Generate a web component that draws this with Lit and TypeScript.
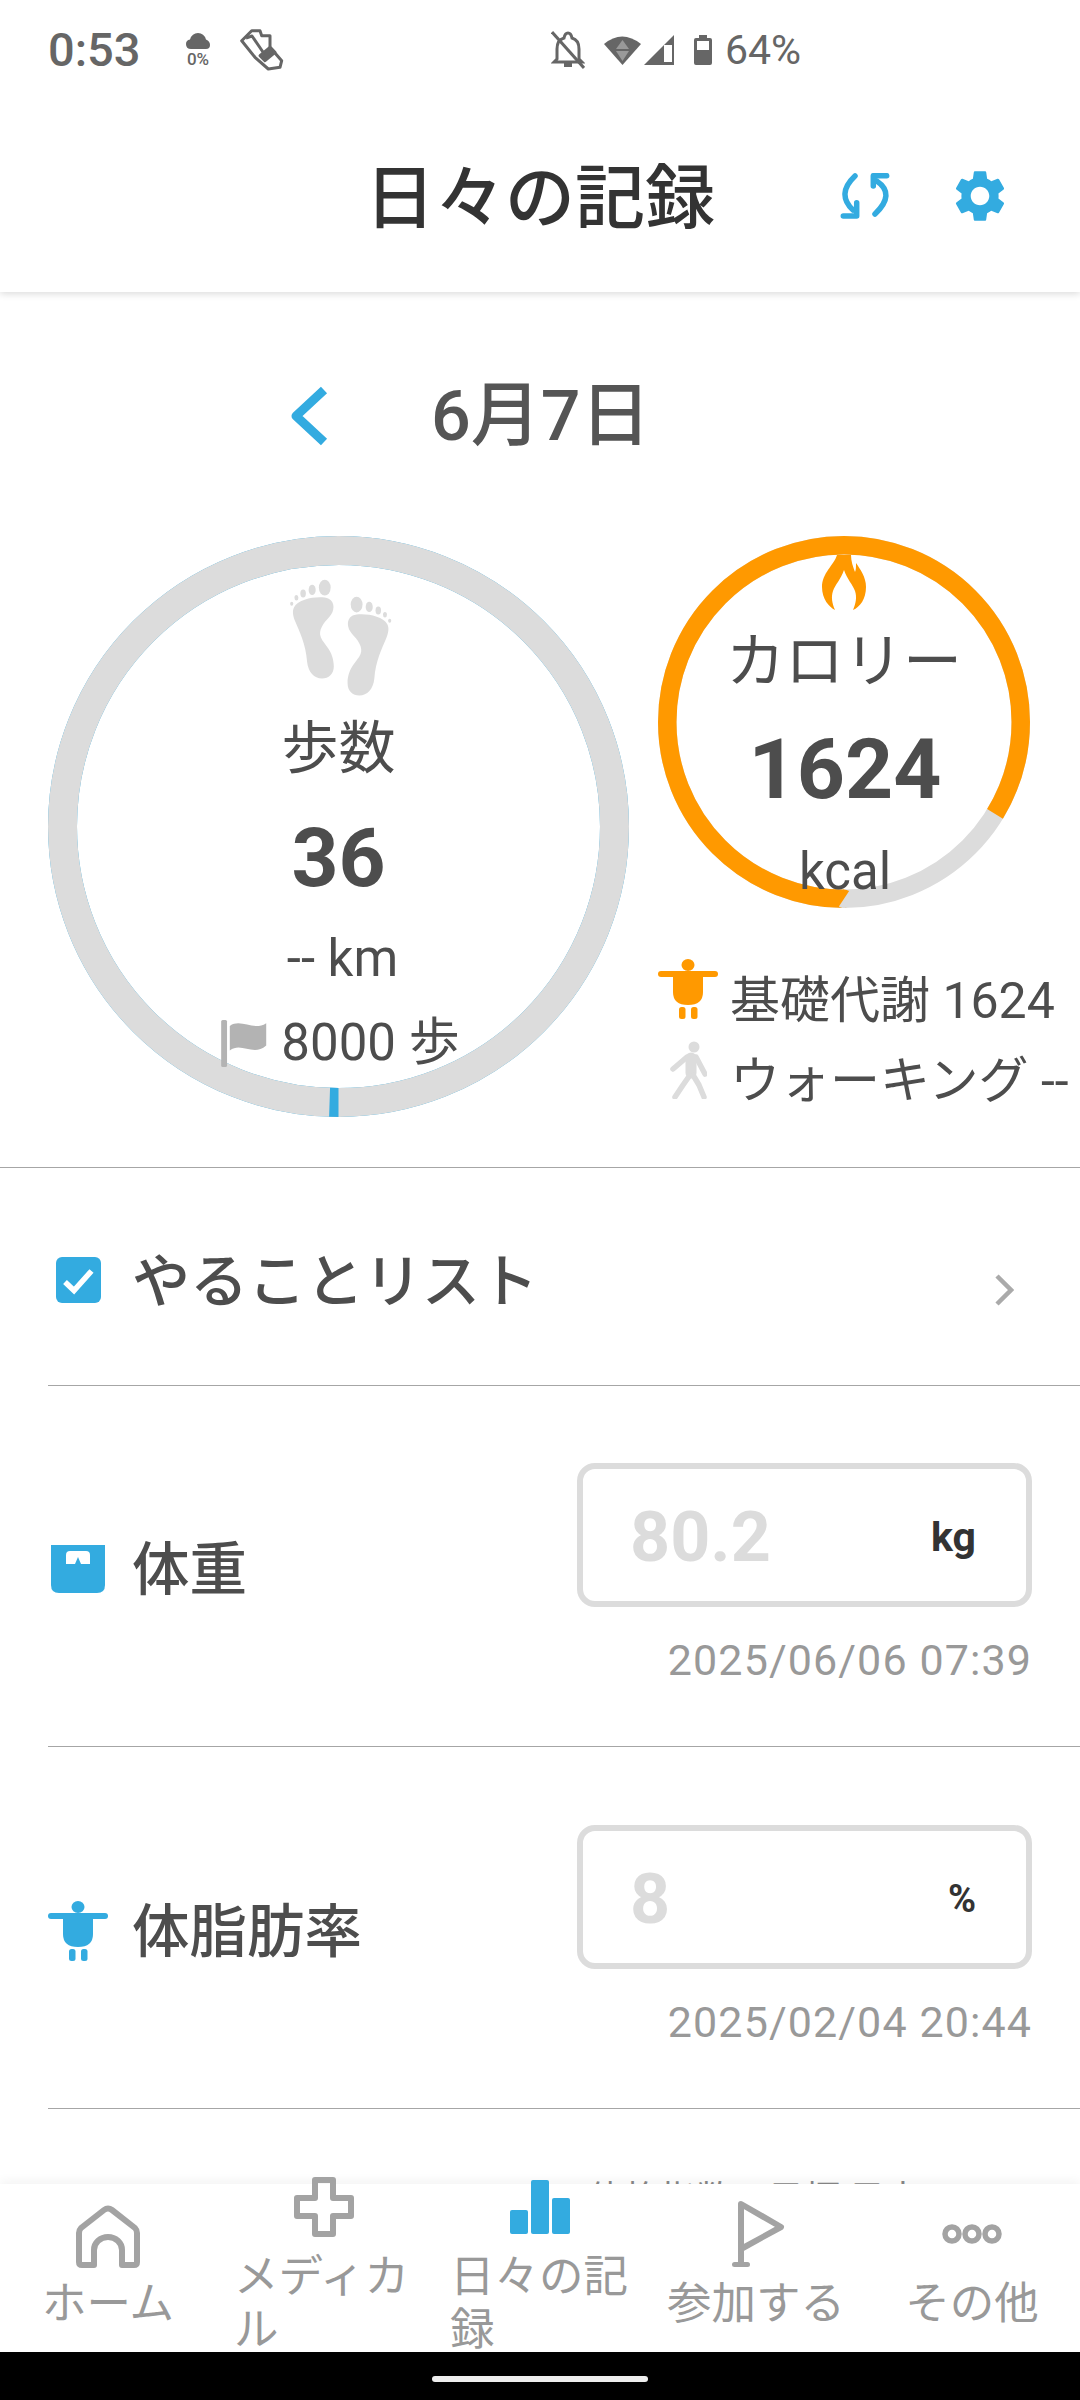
import {LitElement, html, svg, css} from 'lit';
import {customElement} from 'lit/decorators.js';

const personIcon = (cls: string) => html`
  <svg class="person ${cls}" viewBox="0 0 60 60" width="60" height="60">
    <ellipse cx="30" cy="6" rx="6.5" ry="6"></ellipse>
    <rect x="0" y="12" width="60" height="6" rx="3"></rect>
    <path d="M15 17H45V33Q45 46 30 46Q15 46 15 33Z"></path>
    <rect x="21" y="48" width="6.5" height="12" rx="2.5"></rect>
    <rect x="33" y="48" width="6.5" height="12" rx="2.5"></rect>
  </svg>`;

// one foot, drawn in the coordinates of the crop it was measured from
const footPath = svg`
  <ellipse cx="745" cy="172" rx="15" ry="20"></ellipse>
  <ellipse cx="713" cy="178" rx="9" ry="13"></ellipse>
  <ellipse cx="690" cy="187" rx="7" ry="10"></ellipse>
  <ellipse cx="673" cy="198" rx="5" ry="7"></ellipse>
  <ellipse cx="661" cy="213" rx="4" ry="5"></ellipse>
  <path d="M667 222C680 198 735 192 755 200C772 208 770 232 757 246C742 262 728 280 735 298C742 316 768 332 768 372C768 392 755 403 738 403C718 403 703 388 700 360C697 315 680 282 670 258C664 244 662 232 667 222Z"></path>`;

@customElement('app-root')
export class AppRoot extends LitElement {
  static styles = css`
    :host {
      display: flex;
      flex-direction: column;
      width: 1080px;
      height: 2400px;
      overflow: hidden;
      background: #fff;
      color: #4d4d4d;
      font-family: Roboto, "Noto Sans CJK JP", sans-serif;
    }
    svg { display: block; flex: none; }

    /* status bar */
    .status {
      display: flex;
      align-items: center;
      height: 100px;
      padding-left: 48px;
      color: #666;
      flex: none;
      background: #fff;
      position: relative;
      z-index: 2;
    }
    .time { font-size: 47px; font-weight: 500; width: 137px; line-height: 102px; }
    .weather { display: flex; flex-direction: column; align-items: center; width: 26px; }
    .weather span { font-size: 17px; line-height: 16px; font-weight: 500; margin-top: 2px; }
    .shoe { margin-left: 27px; }
    .sys { display: flex; align-items: center; margin-left: 267px; }
    .battery-text { font-size: 41px; margin-left: 13px; }

    /* header */
    .header {
      display: flex;
      align-items: center;
      height: 192px;
      padding-left: 365px;
      flex: none;
      position: relative;
      z-index: 1;
      box-shadow: 0 2px 7px rgba(0, 0, 0, .14);
    }
    .header h1 {
      margin: 6px 0 0;
      font-size: 70px;
      line-height: 80px;
      font-weight: 500;
      color: #333;
      width: 347px;
      white-space: nowrap;
    }
    .sync { margin-left: 128px; }
    .gear { margin-left: 57px; }

    .main { flex: 1; min-height: 0; overflow: hidden; }

    .date {
      display: flex;
      align-items: center;
      gap: 103px;
      padding: 84px 0 80px 290px;
      height: 80px;
    }
    .date span { font-size: 70px; line-height: 80px; font-weight: 500; color: #555; }

    /* summary circles */
    .summary {
      display: flex;
      gap: 29px;
      padding: 0 0 50px 48px;
      border-bottom: 1px solid #a6a6a6;
    }
    .ring {
      position: relative;
      display: flex;
      flex-direction: column;
      align-items: center;
      box-sizing: border-box;
      border-radius: 50%;
    }
    .ring > svg.track { position: absolute; left: 0; top: 0; }
    .ring > * { position: relative; }
    .steps { width: 581px; height: 581px; padding-top: 41px; }
    .kcal { width: 372px; height: 372px; padding-top: 19px; }
    .feet { margin-left: 3px; }
    .lbl { line-height: 70px; white-space: nowrap; }
    .steps .lbl { font-size: 57px; margin-top: 17px; }
    .kcal .lbl { font-size: 59px; margin-top: 17px; }
    .big { font-size: 82px; font-weight: 700; line-height: 100px; margin-top: 24px; }
    .kcal .big { font-size: 84px; margin-left: 2px; margin-top: 23px; }
    .sub { font-size: 51px; line-height: 60px; margin-top: 21px; white-space: nowrap; }
    .steps .sub { padding-left: 8px; }
    .kcal .sub { margin-top: 22px; margin-left: 2px; }
    .goal {
      display: flex;
      align-items: center;
      gap: 14px;
      margin-top: 24px;
      margin-left: 3px;
      font-size: 51px;
      line-height: 60px;
      white-space: nowrap;
    }
    .side { display: flex; flex-direction: column; }
    .facts { margin-top: 48px; width: 420px; }
    .fact { display: flex; align-items: center; height: 80px; font-size: 50px; white-space: nowrap; }
    .fact .ic { width: 60px; display: flex; justify-content: center; margin-right: 12px; flex: none; }
    .fact .up { margin-top: -14px; }
    .fact .up2 { margin-top: -12px; }
    .person { fill: #33abe0; }
    .person.orange { fill: #ff9900; }

    /* list rows */
    .row {
      display: flex;
      align-items: center;
      margin-left: 48px;
      border-bottom: 1px solid #a6a6a6;
      box-sizing: border-box;
    }
    .row .name { font-size: 57.500px; line-height: 80px; font-weight: 500; white-space: nowrap; }
    .todo { height: 218px; padding-left: 8px; gap: 31px; }
    .todo .check { margin-top: 6px; }
    .todo .name { margin-top: 10px; font-size: 58px; }
    .todo .more { margin-left: auto; margin-right: 66px; margin-top: 26px; }
    .metric { height: 361px; justify-content: space-between; padding-right: 48px; }
    .metric.second { height: 362px; }
    .metric .left { display: flex; align-items: center; gap: 24px; margin-top: 10px; }
    .metric .ic { width: 60px; display: flex; justify-content: center; margin-top: -4px; }
    .right { display: flex; flex-direction: column; align-items: flex-end; margin-top: 16px; }
    .field {
      display: flex;
      align-items: center;
      justify-content: space-between;
      box-sizing: border-box;
      width: 455px;
      height: 144px;
      border: 6px solid #dcdcdc;
      border-radius: 18px;
      padding: 4px 50px 0 47px;
    }
    .value { font-size: 70px; font-weight: 700; color: #dcdcdc; }
    .unit { font-size: 41px; font-weight: 700; color: #333; }
    .unit.small { font-size: 38px; }
    .stamp { font-size: 43px; line-height: 50px; margin-top: 28px; color: #999; letter-spacing: 1.100px; white-space: nowrap; }
    .next { padding: 71px 0 0 588px; font-size: 36px; line-height: 40px; color: #888; white-space: nowrap; }

    /* bottom nav, two-line labels spill past the bar on purpose */
    .nav {
      display: grid;
      grid-template-columns: repeat(5, 1fr);
      grid-template-rows: 168px;
      height: 168px;
      flex: none;
      background: #fff;
      position: relative;
      box-shadow: 0 -3px 10px rgba(0, 0, 0, .05);
    }
    .tab {
      display: flex;
      flex-direction: column;
      align-items: center;
      justify-content: center;
      gap: 10px;
      min-height: 0;
      color: #999;
      fill: none;
      stroke: #a3a3a3;
    }
    .tab span {
      font-size: 44.500px;
      line-height: 53px;
      max-width: 180px;
      text-align: left;
    }
    .tab svg { overflow: visible; }
    .gesture {
      position: relative;
      display: flex;
      justify-content: center;
      align-items: center;
      height: 48px;
      background: #000;
      flex: none;
    }
    .gesture div { width: 216px; height: 6px; margin-top: 6px; border-radius: 3px; background: #eee; }
  `;

  render() {
    return html`
      <div class="status">
        <span class="time">0:53</span>
        <div class="weather">
          <svg width="24" height="16" viewBox="0 0 24 16" fill="#666"><path d="M5 16Q0 16 0 11Q0 7 4 6.500Q6 0 12 0Q18 0 20 6.500Q24 8 24 12Q24 16 20 16Z"></path></svg>
          <span>0%</span>
        </div>
        <svg class="shoe" width="46" height="42" viewBox="0 0 46 42" fill="none" stroke="#666" stroke-width="3" stroke-linejoin="round">
          <path d="M3.700 11.700L13.700 1.700H22L23.700 6.700H32V18.300L43.700 31.700L42 38.300L30.300 40L17 28.300Z"></path>
          <path d="M8 9L14 7L27 26"></path>
          <path d="M22 26.700L32 18.300L37 23.300L27 31.700Z" fill="#666"></path>
        </svg>
        <div class="sys">
          <svg width="34" height="38" viewBox="0 0 34 38" fill="none" stroke="#666" stroke-width="3">
            <path d="M6 28V18Q6 9 13 7Q14 2 17 2Q20 2 21 7Q28 9 28 18V28L31 31H3Z"></path>
            <path d="M13 34H21" stroke-width="4"></path>
            <path d="M1 1L33 37"></path>
          </svg>
          <svg style="margin-left:19px" width="37" height="30" viewBox="0 0 37 30">
            <path d="M0 9Q18 -6 37 9L18.500 30Z" fill="#666"></path>
            <path d="M18.500 5L25 14H12Z" fill="#999"></path>
            <path d="M12 16H25L18.500 26Z" fill="#999"></path>
          </svg>
          <svg style="margin-left:3px" width="30" height="30" viewBox="0 0 30 30">
            <path d="M0 30L30 0V30Z" fill="#666"></path>
            <rect x="20" y="10" width="8" height="17" fill="#fff"></rect>
          </svg>
          <svg style="margin-left:20px" width="18" height="30" viewBox="0 0 18 30">
            <path d="M5 0H13V3H16Q18 3 18 5V28Q18 30 16 30H2Q0 30 0 28V5Q0 3 2 3H5Z" fill="#666"></path>
            <rect x="3" y="6" width="12" height="9" fill="#fff"></rect>
          </svg>
          <span class="battery-text">64%</span>
        </div>
      </div>

      <div class="header">
        <h1>日々の記録</h1>
        <svg class="sync" width="52" height="46" viewBox="0 0 52 46" fill="none" stroke="#33abe0" stroke-width="5.500" stroke-linecap="round" stroke-linejoin="round">
          <path d="M15 3Q-4 21 13 37"></path>
          <path d="M16.700 29.700V43H3.300"></path>
          <path d="M35 41Q56 21 36.700 8"></path>
          <path d="M33.300 13V2.700H46.700"></path>
        </svg>
        <svg class="gear" width="62" height="62" viewBox="0 0 24 24" fill="#33abe0">
          <path fill-rule="evenodd" d="M19.140,12.940c0.040-0.300,0.060-0.610,0.060-0.940c0-0.320-0.020-0.640-0.070-0.940l2.030-1.580c0.180-0.140,0.230-0.410,0.120-0.610 l-1.920-3.320c-0.120-0.220-0.370-0.290-0.590-0.220l-2.390,0.960c-0.500-0.380-1.030-0.700-1.620-0.940L14.400,2.810c-0.040-0.240-0.240-0.410-0.480-0.410 h-3.840c-0.240,0-0.430,0.170-0.470,0.410L9.250,5.350C8.660,5.590,8.120,5.920,7.630,6.290L5.240,5.330c-0.220-0.080-0.470,0-0.590,0.220L2.740,8.870 C2.620,9.080,2.660,9.340,2.860,9.480l2.030,1.580C4.840,11.360,4.800,11.690,4.800,12s0.020,0.640,0.070,0.940l-2.030,1.580 c-0.180,0.140-0.230,0.410-0.120,0.610l1.920,3.320c0.120,0.220,0.370,0.290,0.590,0.220l2.390-0.960c0.500,0.380,1.030,0.700,1.620,0.940l0.360,2.540 c0.050,0.240,0.240,0.410,0.480,0.410h3.840c0.240,0,0.440-0.170,0.470-0.410l0.360-2.540c0.590-0.240,1.130-0.560,1.620-0.940l2.390,0.960 c0.220,0.080,0.470,0,0.590-0.220l1.920-3.320c0.120-0.220,0.070-0.470-0.120-0.610L19.140,12.940z M12,15.600c-1.980,0-3.600-1.620-3.600-3.600 s1.620-3.600,3.600-3.600s3.600,1.620,3.600,3.600S13.980,15.600,12,15.600z"></path>
        </svg>
      </div>

      <div class="main">
        <div class="date">
          <svg width="38" height="60" viewBox="0 0 38 60" fill="none" stroke="#33abe0" stroke-width="9" stroke-linejoin="round"><path d="M34 4L6 30L34 56"></path></svg>
          <span>6月7日</span>
        </div>

        <div class="summary">
          <div class="ring steps">
            <svg class="track" width="581" height="581" viewBox="0 0 581 581" fill="none" stroke-width="29">
              <circle cx="290.500" cy="290.500" r="276" stroke="#33abe0"></circle>
              <circle cx="290.500" cy="290.500" r="276" stroke="#dcdcdc"></circle>
              <circle cx="290.500" cy="290.500" r="276" stroke="#33abe0" pathLength="100" stroke-dasharray="0.520 99.480" transform="rotate(90 290.500 290.500)"></circle>
            </svg>
            <svg class="feet" width="107" height="120" viewBox="650 145 270 305" fill="#dcdcdc">
              ${footPath}
              <g transform="translate(1571,43) scale(-1,1)">${footPath}</g>
            </svg>
            <div class="lbl">歩数</div>
            <div class="big">36</div>
            <div class="sub">-- km</div>
            <div class="goal">
              <svg width="47" height="49" viewBox="485 1248 120 124" fill="#b3b3b3">
                <rect x="488" y="1250" width="15" height="120" rx="4"></rect>
                <path d="M510 1265C540 1245 570 1280 603 1258V1315C570 1345 540 1305 510 1328Z"></path>
              </svg>
              <span>8000 歩</span>
            </div>
          </div>

          <div class="side">
            <div class="ring kcal">
              <svg class="track" width="372" height="372" viewBox="0 0 372 372" fill="none" stroke-width="18.500">
                <circle cx="186" cy="186" r="176.750" stroke="#dcdcdc"></circle>
                <circle cx="186" cy="186" r="176.750" stroke="#ff9900" pathLength="100" stroke-dasharray="83.700 16.300" transform="rotate(90 186 186)"></circle>
              </svg>
              <svg width="44" height="55" viewBox="0 0 44 55" fill="#ff9900">
                <path d="M15 0C12 10 0 18 0 32C0 44 7 52 13 55C10 48 9 42 11 36C13 30 19 24 22 15C25 24 31 30 33 36C35 42 34 48 31 55C38 52 44 44 44 32C44 22 38 14 34 8C34 12 34 15 33 17C31 12 29 6 29 0Z"></path>
              </svg>
              <div class="lbl">カロリー</div>
              <div class="big">1624</div>
              <div class="sub">kcal</div>
            </div>
            <div class="facts">
              <div class="fact"><span class="ic up">${personIcon('orange')}</span>基礎代謝 1624</div>
              <div class="fact">
                <span class="ic up2">
                  <svg width="37" height="58" viewBox="0 0 37 58" fill="none" stroke="#dcdcdc" stroke-width="5.500" stroke-linecap="round" stroke-linejoin="round">
                    <circle cx="24" cy="6" r="5.500" fill="#dcdcdc" stroke="none"></circle>
                    <path d="M3 28L17 16H26L35 33"></path>
                    <path d="M21 17V32" stroke-width="11"></path>
                    <path d="M20 34L13 44L5 56"></path>
                    <path d="M23 34L29 44L34 56"></path>
                  </svg>
                </span>ウォーキング --
              </div>
            </div>
          </div>
        </div>

        <div class="row todo">
          <svg class="check" width="45" height="46" viewBox="0 0 45 46">
            <rect width="45" height="46" rx="6" fill="#33abe0"></rect>
            <path d="M9 25L18 33.500L35.500 14" fill="none" stroke="#fff" stroke-width="5.500"></path>
          </svg>
          <span class="name">やることリスト</span>
          <svg class="more" width="20" height="32" viewBox="0 0 20 32" fill="none" stroke="#aaa" stroke-width="4.500"><path d="M3 2L17 16L3 30"></path></svg>
        </div>

        <div class="row metric">
          <div class="left">
            <span class="ic">
              <svg width="54" height="48" viewBox="0 0 54 48">
                <path d="M0 0H54V40Q54 48 46 48H8Q0 48 0 40Z" fill="#33abe0"></path>
                <path d="M15 10Q15 6 19 6H35Q39 6 39 10V19H30L27 12L24 19H15Z" fill="#fff"></path>
              </svg>
            </span>
            <span class="name">体重</span>
          </div>
          <div class="right">
            <div class="field"><span class="value">80.2</span><span class="unit">kg</span></div>
            <div class="stamp">2025/06/06 07:39</div>
          </div>
        </div>

        <div class="row metric second">
          <div class="left">
            <span class="ic">${personIcon('')}</span>
            <span class="name">体脂肪率</span>
          </div>
          <div class="right">
            <div class="field"><span class="value">8</span><span class="unit small">%</span></div>
            <div class="stamp">2025/02/04 20:44</div>
          </div>
        </div>

        <div class="next">体格指数の目標 目安</div>
      </div>

      <div class="nav">
        <div class="tab">
          <svg width="64" height="62" viewBox="0 0 64 62" stroke-width="6" stroke-linejoin="round">
            <path d="M3 56V27Q3 24 5 22L28 4Q32 1 36 4L59 22Q61 24 61 27V56Q61 59 58 59H46V44A14 13 0 0 0 18 44V59H6Q3 59 3 56Z"></path>
          </svg>
          <span>ホーム</span>
        </div>
        <div class="tab">
          <svg width="60" height="62" viewBox="0 0 60 62" stroke-width="6" stroke-linejoin="round">
            <path d="M21 1H39V19H57V37H39V55H21V37H3V19H21Z"></path>
          </svg>
          <span>メディカル</span>
        </div>
        <div class="tab">
          <svg width="62" height="62" viewBox="0 0 62 62" style="fill:#33abe0;stroke:none">
            <rect x="1" y="31" width="18" height="24" rx="2"></rect>
            <rect x="22" y="1" width="18" height="54" rx="2"></rect>
            <rect x="43" y="19" width="18" height="36" rx="2"></rect>
          </svg>
          <span>日々の記録</span>
        </div>
        <div class="tab">
          <svg width="56" height="62" viewBox="0 0 56 62" stroke-width="6" stroke-linejoin="round">
            <path d="M13 -2L53 21L13 43Z"></path>
            <path d="M13 -2V58"></path>
            <rect x="4" y="56" width="18" height="5" rx="2.500" style="fill:#a3a3a3;stroke:none"></rect>
          </svg>
          <span>参加する</span>
        </div>
        <div class="tab">
          <svg width="62" height="62" viewBox="0 0 62 62" stroke-width="5.500">
            <circle cx="11" cy="28" r="7"></circle>
            <circle cx="31" cy="28" r="7"></circle>
            <circle cx="51" cy="28" r="7"></circle>
          </svg>
          <span>その他</span>
        </div>
      </div>
      <div class="gesture"><div></div></div>
    `;
  }
}
